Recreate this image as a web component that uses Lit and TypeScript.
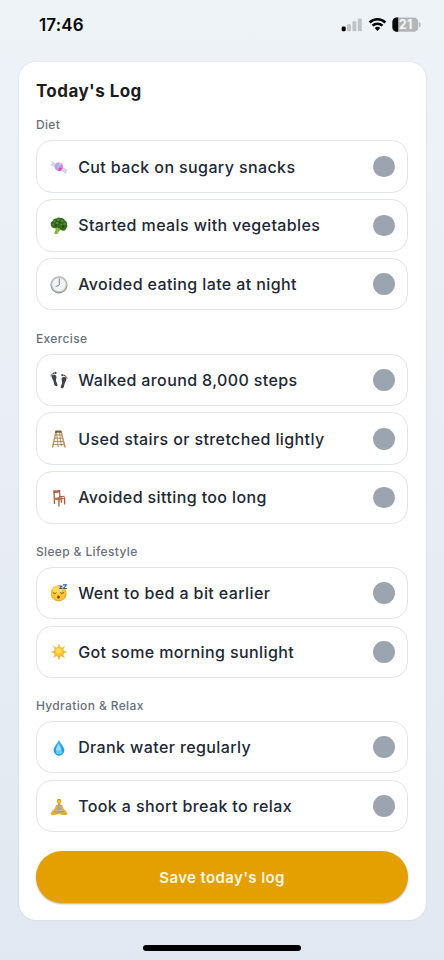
import { LitElement, html, css, svg, TemplateResult } from "lit";
import { customElement, property } from "lit/decorators.js";

const icons: Record<string, TemplateResult> = {
  candy: svg`
    <path d="M6.2 6.6 1.2 3.2 3 6 .6 6.600 5.600 9.400z" fill="#d9d9ec" stroke="#b5b2d6" stroke-width=".4"/>
    <path d="M11.400 11.800 15.600 15.800 15.700 13.300 17.400 12.700 12.200 9z" fill="#dbd3ec" stroke="#b0a7d2" stroke-width=".4"/>
    <circle cx="8.900" cy="8.800" r="4.200" fill="#d58be2"/>
    <path d="M4.800 8.300A4.200 4.200 0 0 1 8.500 4.600C7.500 6.400 8 9.800 6.600 12.200A4.200 4.200 0 0 1 4.800 8.300z" fill="#b9a4e6"/>
    <path d="M7.600 6.300c1.800.2 2.400 1.500 2.200 3-.8 1.200-1.800 1.200-2.500.6-.6-1.300-.5-2.600.3-3.600z" fill="#7fdcc0"/>
    <path d="M9.200 9.500c1.500-.4 2.500.2 3.300 1.300a4.200 4.200 0 0 1-3.900 2.200c-.2-1.200 0-2.400.6-3.500z" fill="#e04fc0"/>
    <circle cx="10" cy="6.300" r="1" fill="#f6c8f2"/>`,
  broccoli: svg`
    <path d="M4.700 9.800c1.500 1.200 1 3.900-.3 6.200-.2 1 2.200 1.700 3.200.7.800-1.800 2.200-3.700 4.400-5.300L9 8.500z" fill="#78b52d"/>
    <path d="M7.600 10.500C8 13 7.300 15 6.600 16.600" stroke="#9bd043" stroke-width=".9" fill="none"/>
    <path d="M.8 7.400C.3 5.700 1.700 4.600 2.600 4.300 2.800 2.300 4.700 1.100 6.300 1.600 7.600.2 9.800.1 10.800 1.100c1.900-.4 3.700.8 4 2.500 1.500.5 2.500 2 2.100 3.500.7 1.300.4 3.700-.8 4.200-.2 2.100-2.400 2.900-3.700 2.100-1.300.2-2.500-1.200-2.900-2.300-1.200.5-2-.3-2.500-1.200-.6 1.400-2.200 1.700-3.200 1.200C2.700 11 .6 9.300.8 7.400z" fill="#34691f"/>
    <g fill="#568c35"><circle cx="4.600" cy="4" r="1.200"/><circle cx="8.400" cy="2.800" r="1.300"/><circle cx="12.200" cy="4" r="1.300"/><circle cx="7.200" cy="6" r="1.200"/><circle cx="3.200" cy="7.500" r="1"/><circle cx="14.600" cy="7" r="1.200"/><circle cx="11.300" cy="7.500" r="1.100"/></g>
    <g fill="#1c4719"><circle cx="6" cy="8.400" r=".9"/><circle cx="9.600" cy="5.200" r=".8"/><circle cx="13.300" cy="9.600" r="1"/><circle cx="5.800" cy="3.900" r=".5"/></g>`,
  clock: svg`
    <circle cx="9" cy="9" r="8.500" fill="#858688"/>
    <circle cx="9" cy="8.600" r="8" fill="#c0c1c3"/>
    <circle cx="9" cy="8.600" r="6.700" fill="#f1f2f3"/>
    <path d="M9.300 2.800V9L6 10.500" stroke="#77797c" stroke-width=".9" fill="none" stroke-linecap="round"/>`,
  feet: svg`
    <g fill="#414346">
      <path d="M1.700 5C1.800 3.400 5.600 3 6.300 5.200 6.900 7 5.600 8.300 6.100 10.200 6.500 12 7.500 12.300 7.500 14 7.500 15.600 5.200 15.700 4.500 14.100 3.700 12.100 3.900 10.900 3 9 2.300 7.600 1.600 6.600 1.700 5z"/>
      <circle cx="5.500" cy="1.900" r="1.150"/><circle cx="3.600" cy="2.300" r=".75"/><circle cx="2.200" cy="2.900" r=".65"/><circle cx="1.300" cy="3.900" r=".6"/><circle cx=".9" cy="5" r=".5"/>
      <path d="M16.400 7.500C16.300 5.900 12.600 5.400 11.700 7.500 11.100 9.300 12.400 10.300 12 12.200 11.700 13.800 10.800 14.500 10.800 15.900 10.800 17.700 13.200 17.800 13.800 16 14.400 14 14.400 13 15.200 11.300 15.900 9.900 16.500 9.100 16.400 7.500z"/>
      <circle cx="12.400" cy="4.200" r="1.150"/><circle cx="14.300" cy="4.500" r=".75"/><circle cx="15.700" cy="5.200" r=".65"/><circle cx="16.700" cy="6.200" r=".55"/><circle cx="17.100" cy="7.300" r=".45"/>
    </g>`,
  ladder: svg`
    <g fill="none" stroke-linecap="round">
      <path d="M6.500 1.800 8.200 16.600" stroke="#a07a4c" stroke-width=".8"/>
      <path d="M5.900 1.800 2.700 17M11.100 1.800 15 17" stroke="#c09860" stroke-width="1.500"/>
      <path d="M5.500 5h6M4.900 8.200h7.500M4.200 11.400h9M3.500 14.600h10.500" stroke="#b78a50" stroke-width="1"/>
      <path d="M9.500 3 11.300 15.500" stroke="#8f6b42" stroke-width=".7"/>
    </g>
    <path d="M5.600.6h5.600l.8 2.200H4.900z" fill="#7d5d3a"/>`,
  chair: svg`
    <path d="M3.600 1.400 10 .9V3.500L3.700 4.200z" fill="#b9654a"/>
    <g fill="none" stroke="#a9593f">
      <path d="M4 1.500 4.500 15" stroke-width="1.300"/>
      <path d="M9.600 1.200 9.900 8" stroke-width="1.200"/>
      <path d="M8.900 11V17.400M14.600 8.200V15.600M11.300 10.500V13.800" stroke-width="1.300"/>
      <path d="M9 7.600 14.600 7.300" stroke-width="1"/>
    </g>
    <path d="M4.200 9 10.300 8 14.900 9.500 9 11.500 4.300 10.500z" fill="#bd6a49"/>`,
  sleep: svg`
    <circle cx="8.700" cy="9.400" r="7.900" fill="#eda01f"/>
    <circle cx="8.600" cy="8.900" r="7.400" fill="#fbc431"/>
    <ellipse cx="7.500" cy="6" rx="4.800" ry="3.400" fill="#ffdc55"/>
    <path d="M3.100 8.700c.8 1 2.300 1 3.100.1M10.500 8.800c.8.900 2.400.8 3.200-.2" stroke="#6f4315" stroke-width=".9" fill="none" stroke-linecap="round"/>
    <ellipse cx="8.500" cy="13" rx="1.300" ry="1.500" fill="#7b3d16"/>
    <path d="M9.500 2h2.300l-2 2.500h2.400M13 .9h3.400L13.700 4.500h3.200" stroke="#3d6096" stroke-width="1.100" fill="none"/>`,
  sun: svg`
    <path d="M9 .3 10.300 4.400 9 5 7.700 4.400zM15.200 2.800 13.200 6.600 11.600 5zM17.700 9 13.600 10.300V7.700zM15.200 15.200 11.400 13.200 13 11.600zM9 17.700 7.700 13.600h2.600zM2.800 15.200 4.800 11.400 6.400 13zM.3 9 4.400 7.700v2.600zM2.800 2.800 6.600 4.800 5 6.400z" fill="#f5b83d"/>
    <circle cx="9" cy="9" r="5.100" fill="#f3a41d"/>
    <circle cx="9" cy="8.700" r="4.600" fill="#fdc432"/>
    <circle cx="8.500" cy="7.800" r="2.800" fill="#ffdb55"/>`,
  drop: svg`
    <defs><linearGradient id="water" x2="0" y2="1"><stop stop-color="#55b8ea"/><stop offset=".55" stop-color="#27a4ea"/><stop offset="1" stop-color="#1c93df"/></linearGradient></defs>
    <path d="M9 .8C10.100 4 14.400 7.700 14.400 11.300a5.400 5.400 0 0 1-10.800 0C3.600 7.700 7.900 4 9 .8z" fill="url(#water)"/>
    <path d="M8.900 4.400C7.700 6.900 5.900 8.700 5.900 10.900c0 1.200 1.900 1.200 3.100 1.200s2.600-.4 2.400-1.500C11 8.700 9.500 7 8.900 4.400z" fill="#a4dcf7"/>
    <ellipse cx="9.100" cy="13.300" rx="3.200" ry="2" fill="#5ccffa"/>`,
  lotus: svg`
    <path d="M8 5h2.200v2.500H8z" fill="#d9971d"/>
    <circle cx="9.100" cy="3.500" r="2.300" fill="#f3b52c"/>
    <path d="M6.900 2.600C7.200.4 11 .4 11.300 2.600L10 2.100H8.200z" fill="#d08d18"/>
    <path d="M5.900 7.300 8.200 6.500 9.100 7.200 10 6.500 12.300 7.300 12.200 12.600H6z" fill="#aba698"/>
    <path d="M6.300 7.300 3.900 11.500 1.700 12.900 2.500 14.300 5.700 12.700 7.700 9.200zM11.900 7.300 14.200 11.500 16.300 12.900 15.500 14.300 12.500 12.700 10.500 9.200z" fill="#eeb035"/>
    <path d="M5.200 12.500 2.500 14.600 5 15.800 9 14.900 13.100 15.800 15.600 14.600 13 12.500z" fill="#a9a08c"/>
    <path d="M2.500 13.800C.3 14.300.1 16.800 2.400 17 5 17.200 7.500 16.600 10 15.600L7 14.500zM15.700 13.800C17.900 14.300 18.100 16.800 15.800 17 13.200 17.200 11 16.800 8.800 16L12 14.500z" fill="#eda921"/>`,
};

interface Group { title: string; items: [string, string][]; }

const groups: Group[] = [
  { title: "Diet", items: [["candy", "Cut back on sugary snacks"], ["broccoli", "Started meals with vegetables"], ["clock", "Avoided eating late at night"]] },
  { title: "Exercise", items: [["feet", "Walked around 8,000 steps"], ["ladder", "Used stairs or stretched lightly"], ["chair", "Avoided sitting too long"]] },
  { title: "Sleep & Lifestyle", items: [["sleep", "Went to bed a bit earlier"], ["sun", "Got some morning sunlight"]] },
  { title: "Hydration & Relax", items: [["drop", "Drank water regularly"], ["lotus", "Took a short break to relax"]] },
];

@customElement("status-bar")
export class StatusBar extends LitElement {
  static styles = css`
    :host { display: flex; justify-content: space-between; align-items: center; height: 49px; padding: 0 23px 0 39px; box-sizing: border-box; }
    .time { font-size: 17px; font-weight: 600; line-height: 20px; letter-spacing: 0.150px; color: #050607; }
    .status { display: block; }
    .level { font: 700 12.500px Inter, sans-serif; fill: #f4f6f7; }
  `;
  render() {
    return html`
      <span class="time">17:46</span>
      <svg class="status" width="80" height="18" viewBox="0 0 80 18">
        <rect x=".7" y="10.500" width="4" height="4.800" rx="1.200" fill="#050607"/>
        <g fill="#bfc3c6"><rect x="6" y="8.200" width="4" height="7.100" rx="1.200"/><rect x="11.400" y="5.300" width="4" height="10" rx="1.200"/><rect x="16.800" y="2.600" width="4" height="12.700" rx="1.200"/></g>
        <g fill="none" stroke="#050607" stroke-width="2.500">
          <path d="M28.600 6.500a11.200 11.200 0 0 1 15.800 0"/>
          <path d="M31.500 9.700a7.100 7.100 0 0 1 10 0"/>
        </g>
        <path d="M33.700 12a4 4 0 0 1 5.600 0L36.500 14.900z" fill="#050607"/>
        <rect x="51.400" y="1.600" width="25.800" height="14.200" rx="4.300" fill="#b3b6b8"/>
        <path d="M57.200 1.600H55.700A4.300 4.300 0 0 0 51.400 5.900V11.500A4.300 4.300 0 0 0 55.700 15.800H57.200z" fill="#050607"/>
        <path d="M78 6.300c2.200.6 2.200 4.400 0 5z" fill="#b3b6b8"/>
        <text class="level" x="64.600" y="13.300" text-anchor="middle" textLength="13.600">21</text>
      </svg>`;
  }
}

@customElement("log-row")
export class LogRow extends LitElement {
  @property() icon = "";
  @property() label = "";
  static styles = css`
    :host { display: flex; align-items: center; box-sizing: border-box; height: 52.300px; padding: 0 12.400px 0 12.700px; border: 1px solid #e0e3e8; border-radius: 16px; background: #fff; }
    .icon { flex: none; width: 18px; height: 18px; margin: 1px 10.600px 0 0; overflow: visible; }
    .label { flex: 1; white-space: nowrap; font-size: 16px; font-weight: 450; line-height: 24px; letter-spacing: 0.390px; color: #222835; }
    .dot { flex: none; width: 21.800px; height: 21.800px; border-radius: 50%; background: #9ca5af; }
  `;
  render() {
    return html`
      <svg class="icon" viewBox="0 0 18 18">${icons[this.icon]}</svg>
      <span class="label">${this.label}</span>
      <span class="dot"></span>`;
  }
}

@customElement("app-root")
export class AppRoot extends LitElement {
  static styles = css`
    :host { display: flex; flex-direction: column; width: 444px; height: 960px; box-sizing: border-box; overflow: hidden; font-family: Inter, sans-serif; background: linear-gradient(#edf3f7, #eaeff6 35%, #e2e8f1); }
    .card { box-sizing: border-box; height: 858px; margin: 12.500px 18.500px 0; padding: 17.500px 17.400px 0; border-radius: 17px; background: #fff; box-shadow: 0 0 2px rgba(80, 95, 120, 0.18); }
    .title { margin: 0 0 13.400px; font-size: 17px; font-weight: 650; line-height: 24px; letter-spacing: 0.450px; color: #1c1c1f; }
    .group { display: block; margin-bottom: 19.100px; }
    .name { margin: 0 0 5.300px; font-size: 12px; font-weight: 500; line-height: 18.700px; letter-spacing: 0.370px; color: #67717d; }
    .rows { display: grid; gap: 6.600px; }
    .save { display: block; width: 100%; height: 51.500px; padding: 0; border: 0; border-radius: 26px; background: #e49f00; box-shadow: 0 1px 2px rgba(80, 60, 10, 0.4); color: #fff8e4; font: 600 15px Inter, sans-serif; letter-spacing: 0.380px; }
    .home { width: 158px; height: 5.500px; margin: 25.500px auto 0; border-radius: 3px; background: #000; }
  `;
  render() {
    return html`
      <status-bar></status-bar>
      <main class="card">
        <h1 class="title">Today's Log</h1>
        ${groups.map((g) => html`
          <section class="group">
            <h2 class="name">${g.title}</h2>
            <div class="rows">${g.items.map(([icon, label]) => html`<log-row icon=${icon} label=${label}></log-row>`)}</div>
          </section>`)}
        <button class="save">Save today's log</button>
      </main>
      <div class="home"></div>`;
  }
}
